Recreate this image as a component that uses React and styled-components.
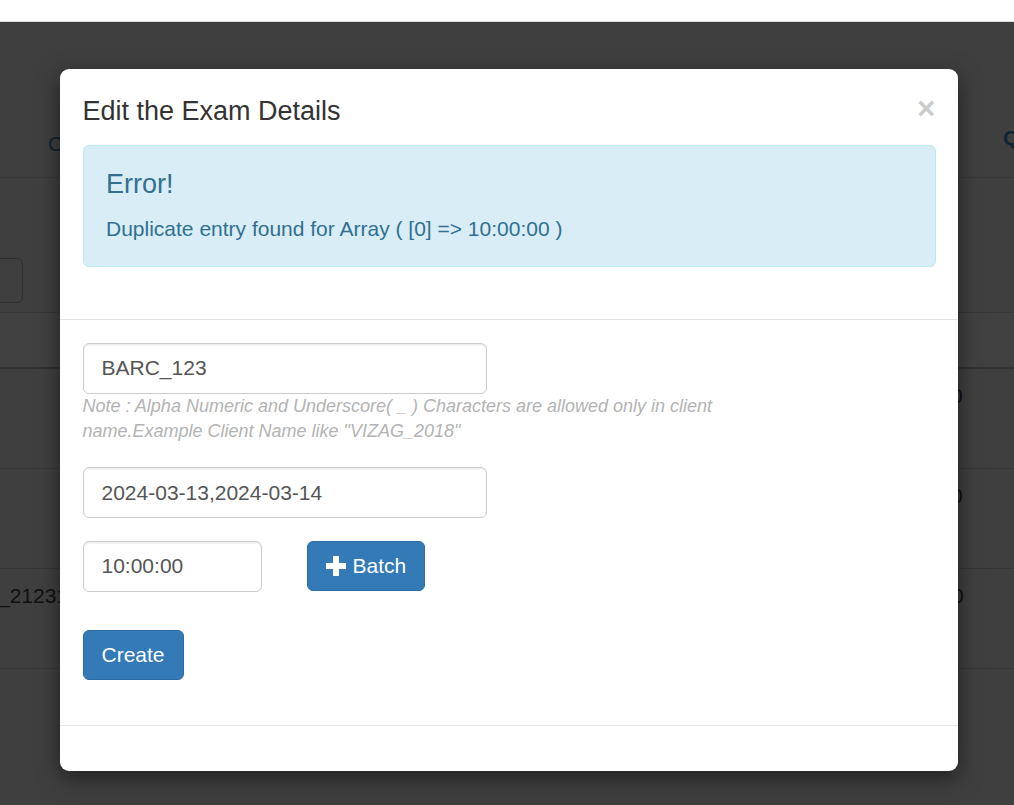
import React from 'react';
import styled, { createGlobalStyle } from 'styled-components';

const GlobalStyle = createGlobalStyle`
  html, body {
    margin: 0;
    padding: 0;
    background: #ffffff;
  }

  body {
    font-family: "Liberation Sans", Arial, Helvetica, sans-serif;
    -webkit-font-smoothing: antialiased;
  }

  * {
    box-sizing: border-box;
  }
`;

const Screen = styled.div`
  position: relative;
  width: 1014px;
  height: 805px;
  overflow: hidden;
`;

const TopStrip = styled.div`
  height: 22px;
  background: #ffffff;
  border-bottom: 1px solid #dcdcdc;
`;

const Dimmed = styled.div`
  height: 783px;
  background: #3f3f3f;
  color: #101010;
  font-size: 21px;
`;

const BgNav = styled.div`
  display: flex;
  align-items: flex-start;
  height: 156px;
  padding: 110px 0 0 48px;
  border-bottom: 1px solid #373737;
`;

const BgTab = styled.span`
  color: #0e2233;
  font-size: 21px;
  font-weight: ${props => (props.bold ? 700 : 400)};
  white-space: nowrap;
  margin-left: ${props => (props.push ? 'auto' : '0')};
  width: ${props => (props.push ? '11px' : 'auto')};
  margin-top: ${props => (props.bold ? '-6px' : '0')};
`;

const BgFilter = styled.div`
  height: 134px;
  padding-top: 80px;
`;

const BgSearch = styled.div`
  width: 100px;
  height: 45px;
  margin-left: -77px;
  border: 1px solid #2f2f2f;
  border-radius: 6px;
`;

const BgHead = styled.div`
  height: 57px;
  border-top: 1px solid #373737;
  border-bottom: 2px solid #323232;
  background: #414141;
`;

const BgRow = styled.div`
  display: flex;
  align-items: flex-start;
  height: 100px;
  padding-top: 15px;
  border-bottom: 1px solid #373737;
`;

const BgCell = styled.span`
  white-space: nowrap;
  margin-left: ${props => props.offset}px;
`;

const Modal = styled.div`
  position: absolute;
  top: 69px;
  left: 60px;
  width: 898px;
  background: #ffffff;
  border-radius: 9px;
  box-shadow: 0 7px 22px rgba(0, 0, 0, 0.5);
  font-size: 21px;
  color: #333333;
  line-height: 1.42857;
`;

const Header = styled.div`
  padding: 22.5px 22.5px 22px;
  border-bottom: 1.5px solid #e5e5e5;
`;

const CloseButton = styled.button`
  float: right;
  margin-top: 1px;
  padding: 0;
  border: 0;
  background: transparent;
  font-family: "Liberation Sans", Arial, sans-serif;
  font-size: 31.5px;
  font-weight: 700;
  line-height: 1;
  color: #000000;
  opacity: 0.2;
  cursor: pointer;
`;

const Title = styled.h4`
  margin: 0;
  font-size: 27px;
  font-weight: 400;
  line-height: 1.42857;
  color: #333333;
`;

const Alert = styled.div`
  margin: 15px 0 30px;
  padding: 22.5px;
  background: #d9edf7;
  border: 1.5px solid #bce8f1;
  border-radius: 6px;
  color: #31708f;
`;

const AlertHeading = styled.h4`
  margin: 0 0 15px;
  font-size: 27px;
  font-weight: 400;
  line-height: 30px;
`;

const AlertText = styled.p`
  margin: 0;
  font-size: 21px;
  line-height: 30px;
`;

const Body = styled.div`
  padding: 22.5px;
`;

const FormGroup = styled.div`
  margin-bottom: ${props => props.gap || 22.5}px;
`;

const Input = styled.input`
  display: block;
  width: ${props => props.w}px;
  height: 51px;
  padding: 9px 18px;
  font-family: "Liberation Sans", Arial, sans-serif;
  font-size: 21px;
  color: #555555;
  background: #ffffff;
  border: 1.5px solid #cccccc;
  border-radius: 6px;
  box-shadow: inset 0 1.5px 1.5px rgba(0, 0, 0, 0.075);
  outline: none;
`;

const HelpText = styled.span`
  display: block;
  max-width: 660px;
  font-size: 18px;
  font-style: italic;
  line-height: 25.5px;
  color: #b3b3b3;
`;

const InlineRow = styled.div`
  display: flex;
  align-items: center;
  gap: 45px;
`;

const Button = styled.button`
  display: inline-flex;
  align-items: center;
  gap: 7px;
  height: 50px;
  padding: 0 18px;
  font-family: "Liberation Sans", Arial, sans-serif;
  font-size: 21px;
  color: #ffffff;
  background: #337ab7;
  border: 1.5px solid #2e6da4;
  border-radius: 6px;
  cursor: pointer;
`;

const Footer = styled.div`
  height: 46px;
  border-top: 1.5px solid #e5e5e5;
`;

const PlusIcon = () => (
  <svg width="20" height="20" viewBox="0 0 20 20" aria-hidden="true">
    <path d="M7 0h6v7h7v6h-7v7H7v-7H0V7h7z" fill="#ffffff" />
  </svg>
);

const App = () => (
  <Screen>
    <GlobalStyle />
    <TopStrip />
    <Dimmed>
      <BgNav>
        <BgTab>Client</BgTab>
        <BgTab bold push>Questions</BgTab>
      </BgNav>
      <BgFilter>
        <BgSearch />
      </BgFilter>
      <BgHead />
      <BgRow>
        <BgCell offset={951}>0</BgCell>
      </BgRow>
      <BgRow>
        <BgCell offset={951}>0</BgCell>
      </BgRow>
      <BgRow>
        <BgCell offset={-2}>_21231</BgCell>
        <BgCell offset={884}>0</BgCell>
      </BgRow>
    </Dimmed>

    <Modal>
      <Header>
        <CloseButton type="button" aria-label="Close">×</CloseButton>
        <Title>Edit the Exam Details</Title>
        <Alert>
          <AlertHeading>Error!</AlertHeading>
          <AlertText>Duplicate entry found for Array ( [0] =&gt; 10:00:00 )</AlertText>
        </Alert>
      </Header>
      <Body>
        <FormGroup>
          <Input w={404} defaultValue="BARC_123" />
          <HelpText>
            Note : Alpha Numeric and Underscore( _ ) Characters are allowed only in client
            name.Example Client Name like "VIZAG_2018"
          </HelpText>
        </FormGroup>
        <FormGroup>
          <Input w={404} defaultValue="2024-03-13,2024-03-14" />
        </FormGroup>
        <FormGroup gap={38}>
          <InlineRow>
            <Input w={179} defaultValue="10:00:00" />
            <Button type="button">
              <PlusIcon />
              Batch
            </Button>
          </InlineRow>
        </FormGroup>
        <FormGroup>
          <Button type="button">Create</Button>
        </FormGroup>
      </Body>
      <Footer />
    </Modal>
  </Screen>
);

export default App;
